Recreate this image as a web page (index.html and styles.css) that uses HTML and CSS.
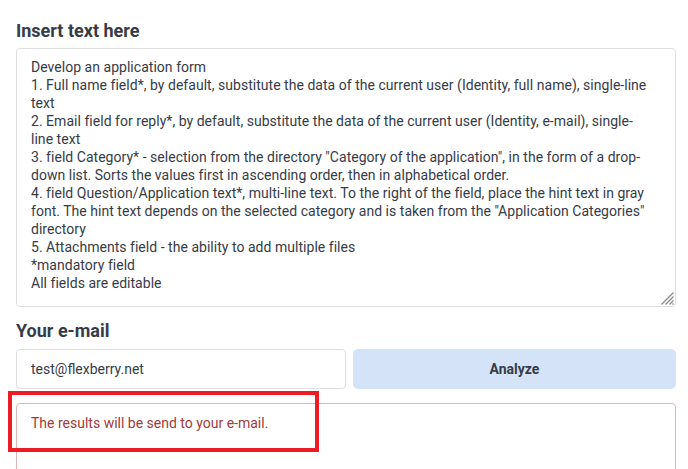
FILE: index.html
```html
<!DOCTYPE html>
<html lang="en">
<head>
<meta charset="utf-8">
<title>Form</title>
<link rel="stylesheet" href="styles.css">
</head>
<body>
<main class="page">
  <h2 class="label">Insert text here</h2>
  <div class="source">
    <span class="ln">Develop an application form</span>
    <span class="ln">1. Full name field*, by default, substitute the data of the current user (Identity, full name), single-line</span>
    <span class="ln">text</span>
    <span class="ln">2. Email field for reply*, by default, substitute the data of the current user (Identity, e-mail), single-</span>
    <span class="ln">line text</span>
    <span class="ln">3. field Category* - selection from the directory "Category of the application", in the form of a drop-</span>
    <span class="ln">down list. Sorts the values first in ascending order, then in alphabetical order.</span>
    <span class="ln">4. field Question/Application text*, multi-line text. To the right of the field, place the hint text in gray</span>
    <span class="ln">font. The hint text depends on the selected category and is taken from the "Application Categories"</span>
    <span class="ln">directory</span>
    <span class="ln">5. Attachments field - the ability to add multiple files</span>
    <span class="ln">*mandatory field</span>
    <span class="ln">All fields are editable</span>
    <svg class="grip" width="14" height="14" viewBox="0 0 14 14" aria-hidden="true">
      <path d="M13.5 1.5 L1.5 13.5 M13.5 5.5 L5.5 13.5 M13.5 9.5 L9.5 13.5 M13.5 12.5 L12.5 13.5" stroke="#8a8a8a" stroke-width="1.3" fill="none"/>
    </svg>
  </div>
  <h2 class="label label-email">Your e-mail</h2>
  <div class="row">
    <input class="email" type="text" value="test@flexberry.net">
    <button class="analyze" type="button">Analyze</button>
  </div>
  <div class="result">
    <p class="result-text">The results will be send to your e-mail.</p>
    <div class="highlight"></div>
  </div>
</main>
</body>
</html>
```
FILE: styles.css
```css
html, body {
  margin: 0;
  padding: 0;
  background: #ffffff;
}
body {
  font-family: Roboto, "Liberation Sans", sans-serif;
  color: #363b48;
}
.page {
  padding: 19px 12px 0 16px;
  display: flex;
  flex-direction: column;
}
.label {
  margin: 0;
  font-size: 18px;
  line-height: 24px;
  font-weight: 700;
  color: #363b48;
  height: 29px;
}
.label-email {
  margin-top: 12px;
  height: 30px;
}
.source {
  position: relative;
  box-sizing: border-box;
  width: 660px;
  height: 259px;
  margin: 0;
  padding: 9px 14px;
  border: 1px solid #dedede;
  border-radius: 4px;
  font-size: 14px;
  line-height: 18px;
  color: #363b48;
  display: flex;
  flex-direction: column;
}
.ln {
  display: block;
  white-space: nowrap;
  letter-spacing: 0.03px;
}
.grip {
  position: absolute;
  right: 1px;
  bottom: 1px;
}
.row {
  display: grid;
  grid-template-columns: 330px 323px;
  column-gap: 7px;
  height: 40px;
}
.email {
  box-sizing: border-box;
  height: 40px;
  margin: 0;
  padding: 0 14px;
  border: 1px solid #dedede;
  border-radius: 4px;
  font-family: Roboto, "Liberation Sans", sans-serif;
  font-size: 14px;
  color: #363b48;
  outline: none;
}
.analyze {
  height: 40px;
  margin: 0;
  border: none;
  border-radius: 5px;
  background: #d4e3f7;
  font-family: Roboto, "Liberation Sans", sans-serif;
  font-size: 14px;
  font-weight: 700;
  color: #363b48;
}
.result {
  position: relative;
  margin-top: 14px;
  box-sizing: border-box;
  width: 660px;
  height: 90px;
  border: 1px solid #e0b4b4;
  border-radius: 4px;
  padding: 10px 14px;
}
.result-text {
  margin: 0;
  font-size: 14px;
  line-height: 18px;
  color: #9f3a38;
}
.highlight {
  position: absolute;
  left: -9px;
  top: -13px;
  width: 311px;
  height: 61px;
  box-sizing: border-box;
  border: 4px solid #ed1c24;
}
```
